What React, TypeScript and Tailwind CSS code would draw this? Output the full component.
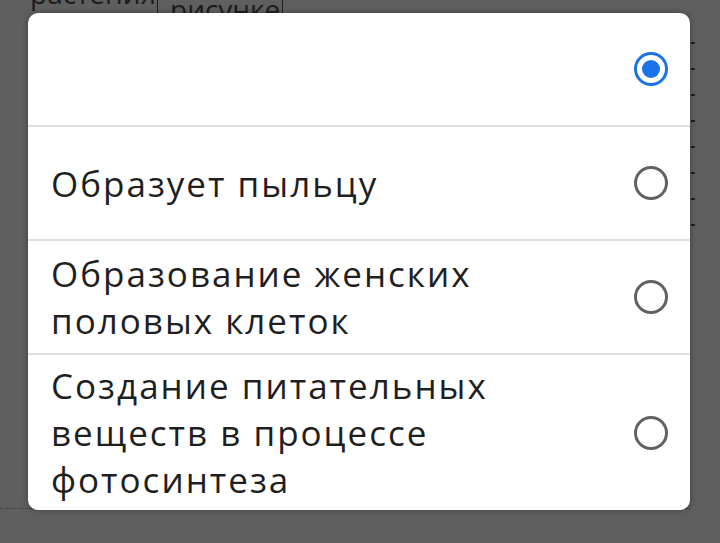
import React from "react";

const options = [
  { id: 1, text: "", checked: true },
  { id: 2, text: "Образует пыльцу", checked: false },
  { id: 3, text: "Образование женских половых клеток", checked: false },
  { id: 4, text: "Создание питательных веществ в процессе фотосинтеза", checked: false },
];

const Radio = ({ checked }: { checked: boolean }) =>
  checked ? (
    <div className="w-[34px] h-[34px] shrink-0 rounded-full border-[3px] border-[#1a73e8] flex items-center justify-center">
      <div className="w-[18px] h-[18px] rounded-full bg-[#1a73e8]" />
    </div>
  ) : (
    <div className="w-[34px] h-[34px] shrink-0 rounded-full border-[3px] border-[#616161]" />
  );

const App = () => {
  return (
    <div
      className="relative w-[720px] h-[543px] overflow-hidden bg-[#5f5f5f]"
      style={{ fontFamily: '"Open Sans", "Noto Sans", sans-serif' }}
    >
      {/* dimmed page behind the dialog */}
      <div className="flex h-full">
        <div className="flex-1 flex flex-col">
          <div className="flex h-[13px]">
            <div className="w-[158px] h-[13px] overflow-hidden border-r border-[#1e1e1e]">
              <div className="-mt-[25px] pl-[30px] text-[28px] leading-[36px] text-[#1c1c1c] whitespace-nowrap">
                растения
              </div>
            </div>
            <div className="w-[125px] h-[13px] overflow-hidden border-r border-[#1e1e1e]">
              <div className="-mt-[9px] pl-[12px] text-[28px] leading-[36px] text-[#1c1c1c] whitespace-nowrap">
                рисунке
              </div>
            </div>
          </div>
          <div className="flex-1" />
          <div className="h-px mb-[34px] border-t border-dotted border-[#3a3a3a]" />
        </div>
        <div className="w-[30px] flex flex-col pt-[42px] gap-[24px]">
          {[0, 1, 2, 3, 4, 5, 6, 7].map((i) => (
            <div key={i} className="w-[4px] h-[2px] ml-[1px] bg-[#1e1e1e]" />
          ))}
        </div>
      </div>

      {/* dialog */}
      <div className="absolute left-[28px] top-[13px] w-[662px] h-[497px] bg-white rounded-[10px] overflow-hidden shadow-[0_0_6px_rgba(0,0,0,0.35)] flex flex-col">
        {options.map((o, idx) => (
          <React.Fragment key={o.id}>
            {idx > 0 && <div className="h-[2px] shrink-0 bg-[#e0e0e0]" />}
            <div
              className={`flex items-center shrink-0 pl-[23px] pr-[22px] ${
                idx === 3 ? "h-[155px]" : "h-[112px]"
              }`}
            >
              <div className="flex-1 pr-[40px] text-[35px] leading-[47px] text-[#1f1f1f] tracking-[2px]">
                {o.text}
              </div>
              <Radio checked={o.checked} />
            </div>
          </React.Fragment>
        ))}
      </div>
    </div>
  );
};

export default App;
